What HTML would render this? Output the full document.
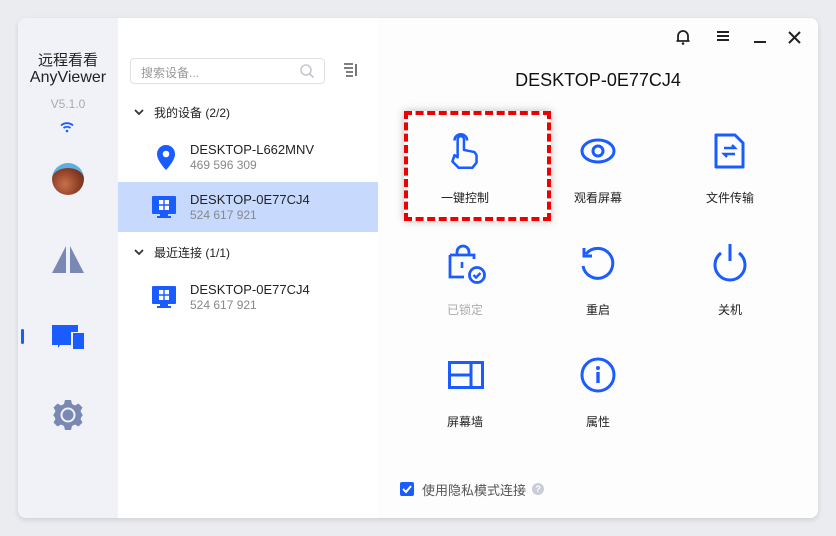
<!DOCTYPE html>
<html><head><meta charset="utf-8"><style>
*{margin:0;padding:0;box-sizing:border-box}
body{width:836px;height:536px;background:#ebecef;position:relative;overflow:hidden;font-family:"Liberation Sans","Noto Sans CJK SC",sans-serif;color:#222}
.win{position:absolute;left:18px;top:18px;width:800px;height:500px;background:#fff;border-radius:8px;overflow:hidden;box-shadow:0 2px 6px rgba(0,0,0,.12)}
.side{position:absolute;left:0;top:0;width:100px;height:500px;background:#f0f2f7}
.abs{position:absolute}
.t{position:absolute;white-space:nowrap}
.lbl{position:absolute;width:120px;text-align:center;font-size:12px;color:#222}
.ic{position:absolute}
</style></head><body>
<div class="win">
 <div class="side">
  <div class="t" style="left:0;width:100px;text-align:center;top:31px;font-size:15px;color:#222">远程看看</div>
  <div class="t" style="left:0;width:100px;text-align:center;top:51px;font-size:16px;color:#222">AnyViewer</div>
  <div class="t" style="left:0;width:100px;text-align:center;top:79px;font-size:12px;color:#aaa">V5.1.0</div>
  <svg class="ic" style="left:41px;top:103px" width="16" height="12" viewBox="0 0 16 12"><path d="M2 4.5a9 9 0 0 1 12 0M4.5 7a5.5 5.5 0 0 1 7 0" stroke="#1a5cff" stroke-width="1.8" fill="none"/><circle cx="8" cy="10" r="1.3" fill="#1a5cff"/></svg>
  <div class="abs" style="left:34px;top:145px;width:32px;height:32px;border-radius:50%;background:radial-gradient(circle at 40% 60%,#c9704a,#8a3b25 60%,#5a2a20);border-top:5px solid #5ab0e0"></div>
  <svg class="ic" style="left:34px;top:228px" width="32" height="28" viewBox="0 0 32 28"><path d="M14 0L0 27h14zM18 0l14 27H18z" fill="#7a89b3"/></svg>
  <div class="abs" style="left:3px;top:311px;width:3px;height:15px;background:#1a5cff;border-radius:2px"></div>
  <svg class="ic" style="left:34px;top:307px" width="32" height="25" viewBox="0 0 32 25"><path d="M0 0h26v7h-7v13H8l-2 3v-3H0z" fill="#1a5cff"/><rect x="21" y="8" width="11" height="16" fill="#1a5cff"/></svg>
  <svg class="ic" style="left:34px;top:381px" width="32" height="32" viewBox="0 0 32 32"><path d="M13 1h6l1 4 3 1.5 3.5-2 4 4-2 3.5L30 15l1 1v0l0 0v0l-1 1-1.5 3 2 3.5-4 4-3.5-2L20 27l-1 4h-6l-1-4-3-1.5-3.5 2-4-4 2-3.5L2 17l-1-1 1-1 1.5-3-2-3.5 4-4 3.5 2L12 5z" fill="#7a89b3"/><circle cx="16" cy="16" r="6.5" fill="none" stroke="#f0f2f7" stroke-width="2"/></svg>
 </div>
 <div class="abs" style="left:112px;top:40px;width:195px;height:26px;border:1px solid #dfe1e6;border-radius:4px"></div>
 <div class="t" style="left:123px;top:46px;font-size:12px;color:#999">搜索设备...</div>
 <svg class="ic" style="left:281px;top:45px" width="16" height="16" viewBox="0 0 16 16"><circle cx="7" cy="7" r="5" stroke="#c5c8d0" stroke-width="1.6" fill="none"/><path d="M10.5 10.5l4 4" stroke="#c5c8d0" stroke-width="1.8"/></svg>
 <svg class="ic" style="left:326px;top:45px" width="15" height="14" viewBox="0 0 15 14"><path d="M0 1h9M0 5h9M2 9h7M2 13h7M12 1v12" stroke="#555" stroke-width="1.6" fill="none"/></svg>
 <svg class="ic" style="left:116px;top:90px" width="10" height="8" viewBox="0 0 10 8"><path d="M1 2l4 4 4-4" stroke="#333" stroke-width="1.8" fill="none"/></svg>
 <div class="t" style="left:136px;top:86px;font-size:12px">我的设备 (2/2)</div>
 <svg class="ic" style="left:138px;top:127px" width="20" height="26" viewBox="0 0 20 26"><path d="M10 0a9 9 0 0 0-9 9c0 7 9 16 9 16s9-9 9-16a9 9 0 0 0-9-9z" fill="#1a5cff"/><circle cx="10" cy="9" r="3.3" fill="#fff"/></svg>
 <div class="t" style="left:172px;top:124px;font-size:13px">DESKTOP-L662MNV</div>
 <div class="t" style="left:172px;top:140px;font-size:12px;color:#888">469 596 309</div>
 <div class="abs" style="left:100px;top:164px;width:260px;height:50px;background:#c7d9fc"></div>
 <svg class="ic" style="left:134px;top:178px" width="24" height="23" viewBox="0 0 24 23"><rect x="0" y="0" width="24" height="18" rx="1" fill="#1a5cff"/><rect x="8" y="18" width="8" height="2" fill="#1a5cff"/><rect x="5" y="20" width="14" height="2" fill="#1a5cff"/><path d="M7 4h4.3v4.3H7zM12.7 4H17v4.3h-4.3zM7 9.7h4.3V14H7zM12.7 9.7H17V14h-4.3z" fill="#fff"/></svg>
 <div class="t" style="left:172px;top:174px;font-size:13px">DESKTOP-0E77CJ4</div>
 <div class="t" style="left:172px;top:190px;font-size:12px;color:#888">524 617 921</div>
 <svg class="ic" style="left:116px;top:230px" width="10" height="8" viewBox="0 0 10 8"><path d="M1 2l4 4 4-4" stroke="#333" stroke-width="1.8" fill="none"/></svg>
 <div class="t" style="left:136px;top:226px;font-size:12px">最近连接 (1/1)</div>
 <svg class="ic" style="left:134px;top:268px" width="24" height="23" viewBox="0 0 24 23"><rect x="0" y="0" width="24" height="18" rx="1" fill="#1a5cff"/><rect x="8" y="18" width="8" height="2" fill="#1a5cff"/><rect x="5" y="20" width="14" height="2" fill="#1a5cff"/><path d="M7 4h4.3v4.3H7zM12.7 4H17v4.3h-4.3zM7 9.7h4.3V14H7zM12.7 9.7H17V14h-4.3z" fill="#fff"/></svg>
 <div class="t" style="left:172px;top:264px;font-size:13px">DESKTOP-0E77CJ4</div>
 <div class="t" style="left:172px;top:280px;font-size:12px;color:#888">524 617 921</div>
 <div class="abs" style="left:360px;top:0;width:440px;height:500px;background:#fdfdfe"></div>
 <svg class="ic" style="left:657px;top:11px" width="16" height="16" viewBox="0 0 16 16"><path d="M3 12V7a5 5 0 0 1 10 0v5zM1.5 12h13" stroke="#222" stroke-width="1.8" fill="none"/><circle cx="8" cy="14.5" r="1.3" fill="#222"/></svg>
 <svg class="ic" style="left:698px;top:12px" width="14" height="12" viewBox="0 0 14 12"><path d="M1 2h12M1 6h12M1 10h12" stroke="#222" stroke-width="2"/></svg>
 <svg class="ic" style="left:735px;top:12px" width="14" height="14" viewBox="0 0 14 14"><path d="M1 12h12" stroke="#222" stroke-width="2"/></svg>
 <svg class="ic" style="left:770px;top:13px" width="13" height="13" viewBox="0 0 13 13"><path d="M1 1l11 11M12 1L1 12" stroke="#222" stroke-width="2"/></svg>
 <div class="t" style="left:360px;width:440px;text-align:center;top:52px;font-size:18px;color:#111">DESKTOP-0E77CJ4</div>
 <div class="abs" style="left:386px;top:93px;width:147px;height:110px;border:4px dashed #ee0000;box-shadow:0 0 8px rgba(0,0,0,.25)"></div>
 <svg class="ic" style="left:429px;top:112px" width="36" height="42" viewBox="0 0 32 40"><path d="M6 10a6 6 0 1 1 12 0" stroke="#1a5cff" stroke-width="2.4" fill="none"/><path d="M9 26V9a3 3 0 0 1 6 0v10l10 2 2 3v7l-4 5H10l-6-6 2-6z" stroke="#1a5cff" stroke-width="2.4" fill="none" stroke-linejoin="round"/></svg>
 <div class="lbl" style="left:387px;top:171px">一键控制</div>
 <svg class="ic" style="left:562px;top:119px" width="36" height="28" viewBox="0 0 36 28"><ellipse cx="18" cy="14" rx="16" ry="11" stroke="#1a5cff" stroke-width="3" fill="none"/><circle cx="18" cy="14" r="5" stroke="#1a5cff" stroke-width="3" fill="none"/></svg>
 <div class="lbl" style="left:520px;top:171px">观看屏幕</div>
 <svg class="ic" style="left:696px;top:115px" width="32" height="36" viewBox="0 0 32 36"><path d="M2 2h19l8 8v24H2z" stroke="#1a5cff" stroke-width="3" fill="none" stroke-linejoin="round"/><path d="M10 15h11l-3-3M21 21H10l3 3" stroke="#1a5cff" stroke-width="2.4" fill="none"/></svg>
 <div class="lbl" style="left:652px;top:171px">文件传输</div>
 <svg class="ic" style="left:430px;top:226px" width="38" height="40" viewBox="0 0 38 40"><path d="M9 11V8a6 6 0 0 1 12 0v3M2 11h24v4M2 11v22h14" stroke="#1a5cff" stroke-width="2.8" fill="none"/><path d="M14 18v6" stroke="#1a5cff" stroke-width="2.6"/><circle cx="29" cy="31" r="7.5" stroke="#1a5cff" stroke-width="2.8" fill="#fff"/><path d="M25.5 31l2.5 2.5 4.5-4.5" stroke="#1a5cff" stroke-width="2.4" fill="none"/></svg>
 <div class="lbl" style="left:387px;top:283px;color:#aaa">已锁定</div>
 <svg class="ic" style="left:562px;top:228px" width="36" height="36" viewBox="0 0 36 36"><path d="M6 8a15 15 0 1 1-3 12" stroke="#1a5cff" stroke-width="3" fill="none"/><path d="M4 2v8h8" stroke="#1a5cff" stroke-width="3" fill="none"/></svg>
 <div class="lbl" style="left:520px;top:283px">重启</div>
 <svg class="ic" style="left:694px;top:225px" width="36" height="40" viewBox="0 0 36 40"><path d="M9 10a15 15 0 1 0 18 0" stroke="#1a5cff" stroke-width="3" fill="none"/><path d="M18 1v17" stroke="#1a5cff" stroke-width="3"/></svg>
 <div class="lbl" style="left:652px;top:283px">关机</div>
 <svg class="ic" style="left:430px;top:343px" width="36" height="28" viewBox="0 0 36 28"><rect x="1.5" y="1.5" width="33" height="25" stroke="#1a5cff" stroke-width="3" fill="none"/><path d="M23 1v26M1 14h22" stroke="#1a5cff" stroke-width="3"/></svg>
 <div class="lbl" style="left:387px;top:395px">屏幕墙</div>
 <svg class="ic" style="left:562px;top:339px" width="36" height="36" viewBox="0 0 36 36"><circle cx="18" cy="18" r="16" stroke="#1a5cff" stroke-width="3" fill="none"/><circle cx="18" cy="11" r="2" fill="#1a5cff"/><path d="M18 15v11" stroke="#1a5cff" stroke-width="3.4"/></svg>
 <div class="lbl" style="left:520px;top:395px">属性</div>
 <div class="abs" style="left:382px;top:464px;width:14px;height:14px;background:#1a5cff;border-radius:2px"></div>
 <svg class="ic" style="left:382px;top:464px" width="14" height="14" viewBox="0 0 14 14"><path d="M3 7l3 3 5-6" stroke="#fff" stroke-width="2" fill="none"/></svg>
 <div class="t" style="left:404px;top:462px;font-size:13px;color:#555">使用隐私模式连接</div>
 <div class="abs" style="left:514px;top:465px;width:12px;height:12px;border-radius:50%;background:#c9cdd8;color:#fff;font-size:9px;text-align:center;line-height:12px;font-weight:bold">?</div>
</div>
</body></html>
